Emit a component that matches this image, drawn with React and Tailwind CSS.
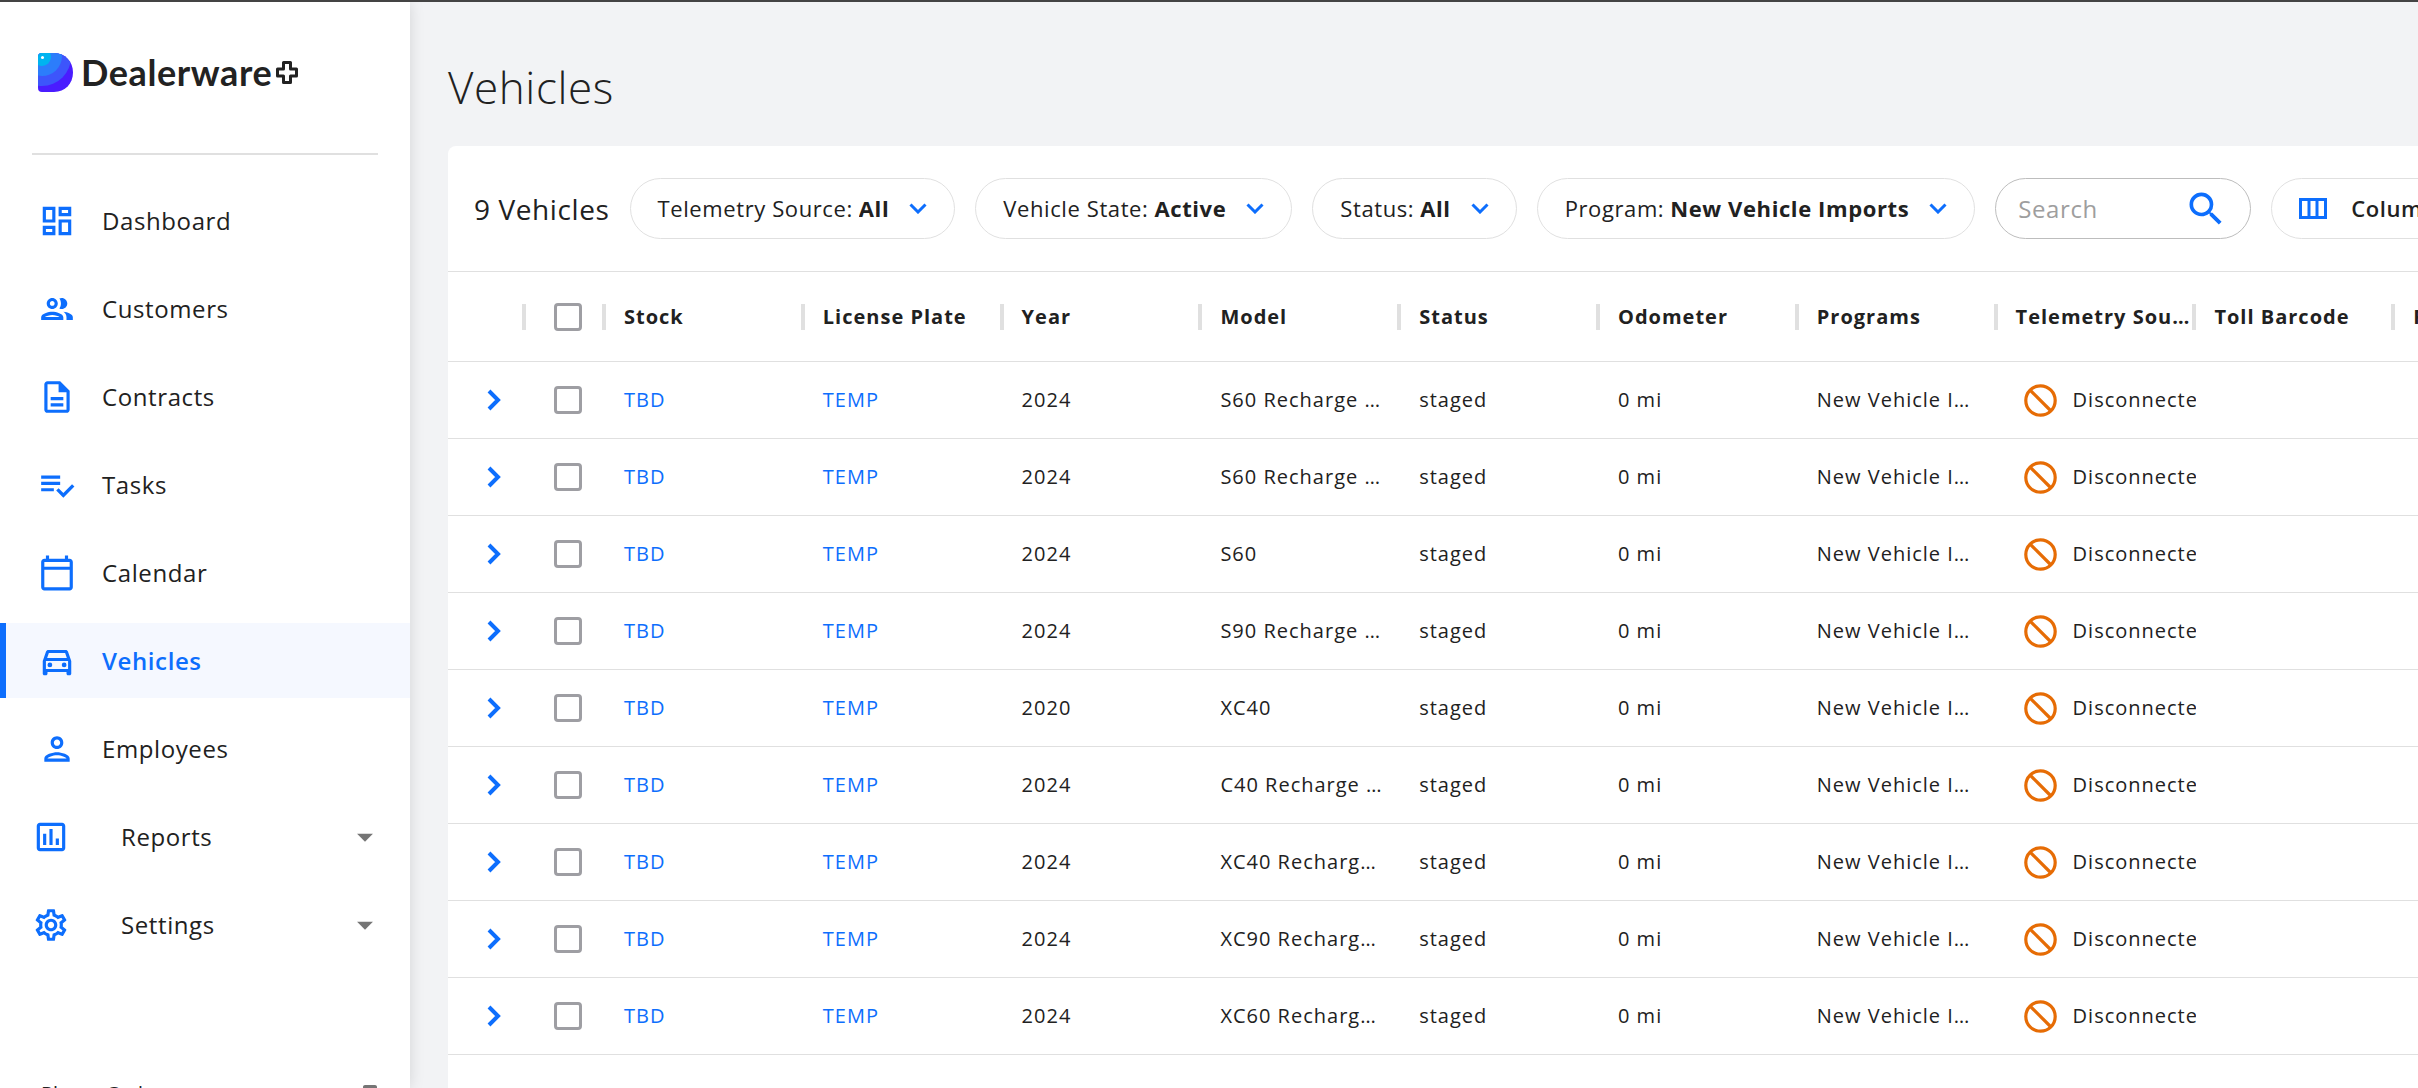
import { useState } from "react";
import {
  MdOutlineDashboard,
  MdOutlineGroup,
  MdOutlineDescription,
  MdOutlineCalendarToday,
  MdOutlineDirectionsCar,
  MdOutlinePerson,
  MdOutlineAssessment,
  MdOutlineSettings,
  MdArrowDropDown,
  MdSearch,
  MdSmartphone,
} from "react-icons/md";

function TasksIcon({ className }) {
  return (
    <svg className={className} viewBox="0 0 24 24" fill="currentColor">
      <path d="M14 10H2v2h12v-2zm0-4H2v2h12V6zM2 16h8v-2H2v2zm19.5-4.5L23 13l-6.99 7-4.51-4.5L13 14l3.01 3 5.49-5.5z" />
    </svg>
  );
}

const navItems = [
  { label: "Dashboard", Icon: MdOutlineDashboard },
  { label: "Customers", Icon: MdOutlineGroup },
  { label: "Contracts", Icon: MdOutlineDescription },
  { label: "Tasks", Icon: TasksIcon },
  { label: "Calendar", Icon: MdOutlineCalendarToday },
  { label: "Vehicles", Icon: MdOutlineDirectionsCar, active: true },
  { label: "Employees", Icon: MdOutlinePerson },
];

const navGroups = [
  { label: "Reports", Icon: MdOutlineAssessment },
  { label: "Settings", Icon: MdOutlineSettings },
];

const filters = [
  { id: "telemetry", label: "Telemetry Source:", value: "All" },
  { id: "state", label: "Vehicle State:", value: "Active" },
  { id: "status", label: "Status:", value: "All" },
  { id: "program", label: "Program:", value: "New Vehicle Imports" },
];

const columns = [
  "Stock",
  "License Plate",
  "Year",
  "Model",
  "Status",
  "Odometer",
  "Programs",
  "Telemetry Sou…",
  "Toll Barcode",
  "Fuel",
];

const vehicles = [
  { id: 1, year: "2024", model: "S60 Recharge …" },
  { id: 2, year: "2024", model: "S60 Recharge …" },
  { id: 3, year: "2024", model: "S60" },
  { id: 4, year: "2024", model: "S90 Recharge …" },
  { id: 5, year: "2020", model: "XC40" },
  { id: 6, year: "2024", model: "C40 Recharge …" },
  { id: 7, year: "2024", model: "XC40 Recharg…" },
  { id: 8, year: "2024", model: "XC90 Recharg…" },
  { id: 9, year: "2024", model: "XC60 Recharg…" },
];

function Logo() {
  return (
    <a href="#home" className="flex items-center gap-2 pl-[38px] h-[40px]" aria-label="Dealerware home">
      <svg className="w-[35px] h-[39px]" viewBox="0 0 35 39">
        <defs>
          <clipPath id="logo-shape">
            <path d="M4 0h12c11 0 19 8.500 19 19.500S27 39 16 39H4a4 4 0 0 1-4-4V4a4 4 0 0 1 4-4z" />
          </clipPath>
        </defs>
        <g clipPath="url(#logo-shape)">
          <rect width="35" height="39" fill="#4a1cff" />
          <circle cx="4" cy="4" r="29" fill="#3d55fb" />
          <circle cx="4" cy="3" r="20" fill="#2c7dfb" />
          <circle cx="4" cy="4" r="9" fill="#00b4f0" />
          <circle cx="4.500" cy="4.500" r="1.500" fill="#fff" />
        </g>
      </svg>
      <span className="flex items-center gap-1 font-['Lato',sans-serif] text-[36px] leading-[40px] font-bold text-[#222]">
        Dealerware
        <svg className="w-[22px] h-[23px]" viewBox="0 0 22 23" fill="none" stroke="#222" strokeWidth="3" strokeLinejoin="round">
          <path d="M7.500 1.500h7v6.500h6v7h-6v6.500h-7V15h-6V8h6z" />
        </svg>
      </span>
    </a>
  );
}

function Sidebar() {
  return (
    <aside className="relative z-10 flex flex-col w-[410px] shrink-0 overflow-y-clip bg-white pt-[50px] shadow-[0_0_14px_rgba(0,0,0,0.13)]">
      <Logo />
      <hr className="mt-[61px] mx-8 border-t-2 border-[#e0e0e0]" />
      <nav className="mt-7 flex flex-col gap-[13px]">
        {navItems.map(({ label, Icon, active }) => (
          <a
            key={label}
            href={`#${label.toLowerCase()}`}
            className={
              active
                ? "flex items-center h-[75px] border-l-[6px] border-[#0d6efd] bg-[#f5f8ff] pl-8 gap-[26px] font-semibold text-[#0d6efd]"
                : "flex items-center h-[75px] border-l-[6px] border-transparent pl-8 gap-[26px]"
            }
          >
            <Icon className="size-[38px] text-[#0d6efd]" />
            {label}
          </a>
        ))}
        {navGroups.map(({ label, Icon }) => (
          <button key={label} type="button" className="flex items-center h-[75px] pl-8 pr-[26px] text-left">
            <Icon className="size-[38px] text-[#0d6efd]" />
            <span className="ml-[51px] flex-1">{label}</span>
            <MdArrowDropDown className="size-[38px] text-[#757575]" />
          </button>
        ))}
      </nav>
      <button
        type="button"
        className="mt-[118px] flex items-start justify-between pl-[41px] pr-7 text-[20px] leading-[28px] tracking-normal"
      >
        Phone Code
        <MdSmartphone className="mt-1 size-6 text-[#757575]" />
      </button>
    </aside>
  );
}

function FilterPill({ id, label, value }) {
  return (
    <div className="flex items-center h-[61px] shrink-0 rounded-full border border-[#e0e0e0] px-[27px]">
      <label htmlFor={id} className="whitespace-nowrap">
        {label}
      </label>
      <select id={id} defaultValue={value} className="ml-[6px] appearance-none field-sizing-content font-bold">
        <option>{value}</option>
      </select>
      <svg className="ml-5 w-[18px] h-[11px]" viewBox="0 0 18 11" fill="none" stroke="#0d6efd" strokeWidth="3">
        <path d="M1.500 1.500L9 9l7.500-7.500" />
      </svg>
    </div>
  );
}

function Toolbar() {
  return (
    <div className="flex items-center gap-5 h-[125px] pl-[26px] text-[22px]">
      <h2 className="text-[28px] whitespace-nowrap">9 Vehicles</h2>
      {filters.map((filter) => (
        <FilterPill key={filter.id} {...filter} />
      ))}
      <div className="flex items-center h-[61px] w-[256px] shrink-0 rounded-full border border-[#bdbdbd] px-[22px]">
        <input
          type="search"
          aria-label="Search vehicles"
          placeholder="Search"
          className="min-w-0 flex-1 text-[24px] outline-none placeholder:text-[#9e9e9e]"
        />
        <MdSearch className="size-[44px] shrink-0 text-[#0d6efd]" />
      </div>
      <button type="button" className="flex items-center gap-6 h-[61px] shrink-0 rounded-full border border-[#e0e0e0] px-[27px]">
        <svg className="w-[28px] h-[21px]" viewBox="0 0 28 21" fill="none" stroke="#0d6efd" strokeWidth="3">
          <path d="M1.500 1.500h25v18h-25zM10 1.500v18M18 1.500v18" />
        </svg>
        <span className="font-semibold">Columns</span>
      </button>
    </div>
  );
}

function Checkbox({ label, checked, onChange }) {
  return (
    <input
      type="checkbox"
      aria-label={label}
      checked={checked}
      onChange={onChange}
      className="block size-7 appearance-none rounded-[4px] border-[3px] border-[#9e9ea3] checked:bg-[#0d6efd]"
    />
  );
}

function VehicleRow({ vehicle, checked, onToggle }) {
  return (
    <tr className="h-[77px] border-b border-[#e0e0e0]">
      <td className="pl-[39px]">
        <button type="button" aria-label="Expand row" className="block">
          <svg className="w-[14px] h-[22px]" viewBox="0 0 14 22" fill="none" stroke="#0d6efd" strokeWidth="4">
            <path d="M2 2l9 9-9 9" />
          </svg>
        </button>
      </td>
      <td className="pl-7">
        <Checkbox label={`Select vehicle ${vehicle.id}`} checked={checked} onChange={onToggle} />
      </td>
      <td className="pl-[18px]">
        <a href="#stock" className="text-[#0d6efd]">TBD</a>
      </td>
      <td className="pl-[18px]">
        <a href="#plate" className="text-[#0d6efd]">TEMP</a>
      </td>
      <td className="pl-[18px]">{vehicle.year}</td>
      <td className="pl-[18px] whitespace-nowrap">{vehicle.model}</td>
      <td className="pl-[18px]">staged</td>
      <td className="pl-[18px]">0 mi</td>
      <td className="pl-[18px] whitespace-nowrap">New Vehicle I…</td>
      <td className="pl-[26px]">
        <div className="flex items-center gap-4 overflow-hidden">
          <svg className="size-[33px] shrink-0" viewBox="0 0 33 33" fill="none" stroke="#e66c05" strokeWidth="3.200">
            <circle cx="16.500" cy="16.500" r="14.700" />
            <path d="M6 6l21 21" />
          </svg>
          <span>Disconnected</span>
        </div>
      </td>
      <td />
      <td />
    </tr>
  );
}

function VehicleTable() {
  const [selected, setSelected] = useState([]);

  const toggle = (id) => {
    setSelected((prev) => (prev.includes(id) ? prev.filter((x) => x !== id) : [...prev, id]));
  };

  const allSelected = selected.length === vehicles.length;

  return (
    <table className="w-[2146px] table-fixed border-collapse border-t border-[#e0e0e0] text-[20px] tracking-wider">
      <colgroup>
        <col className="w-[78px]" />
        <col className="w-[80px]" />
        {columns.map((name) => (
          <col key={name} />
        ))}
      </colgroup>
      <thead>
        <tr className="h-[90px] border-b border-[#e0e0e0] text-left">
          <th>
            <span className="ml-auto block h-[26px] w-1 bg-[#e0e0e0]" />
          </th>
          <th className="pl-7">
            <div className="flex items-center justify-between">
              <Checkbox
                label="Select all vehicles"
                checked={allSelected}
                onChange={() => setSelected(allSelected ? [] : vehicles.map((v) => v.id))}
              />
              <span className="h-[26px] w-1 bg-[#e0e0e0]" />
            </div>
          </th>
          {columns.map((name) => (
            <th key={name} className="pl-[18px] font-bold">
              <div className="flex items-center justify-between whitespace-nowrap">
                {name}
                <span className="h-[26px] w-1 bg-[#e0e0e0]" />
              </div>
            </th>
          ))}
        </tr>
      </thead>
      <tbody>
        {vehicles.map((vehicle) => (
          <VehicleRow
            key={vehicle.id}
            vehicle={vehicle}
            checked={selected.includes(vehicle.id)}
            onToggle={() => toggle(vehicle.id)}
          />
        ))}
      </tbody>
    </table>
  );
}

export default function App() {
  return (
    <div className="flex h-screen overflow-hidden border-t-2 border-[#444] bg-[#f2f3f5] font-['Open_Sans',sans-serif] text-[24px] tracking-wide text-[#212121]">
      <Sidebar />
      <main className="min-w-0 flex-1 flex flex-col pl-[38px]">
        <h1 className="pt-[53px] pb-[27px] text-[44px] leading-[64px] font-light">Vehicles</h1>
        <section className="flex-1 overflow-hidden rounded-tl-lg bg-white">
          <Toolbar />
          <VehicleTable />
        </section>
      </main>
    </div>
  );
}
